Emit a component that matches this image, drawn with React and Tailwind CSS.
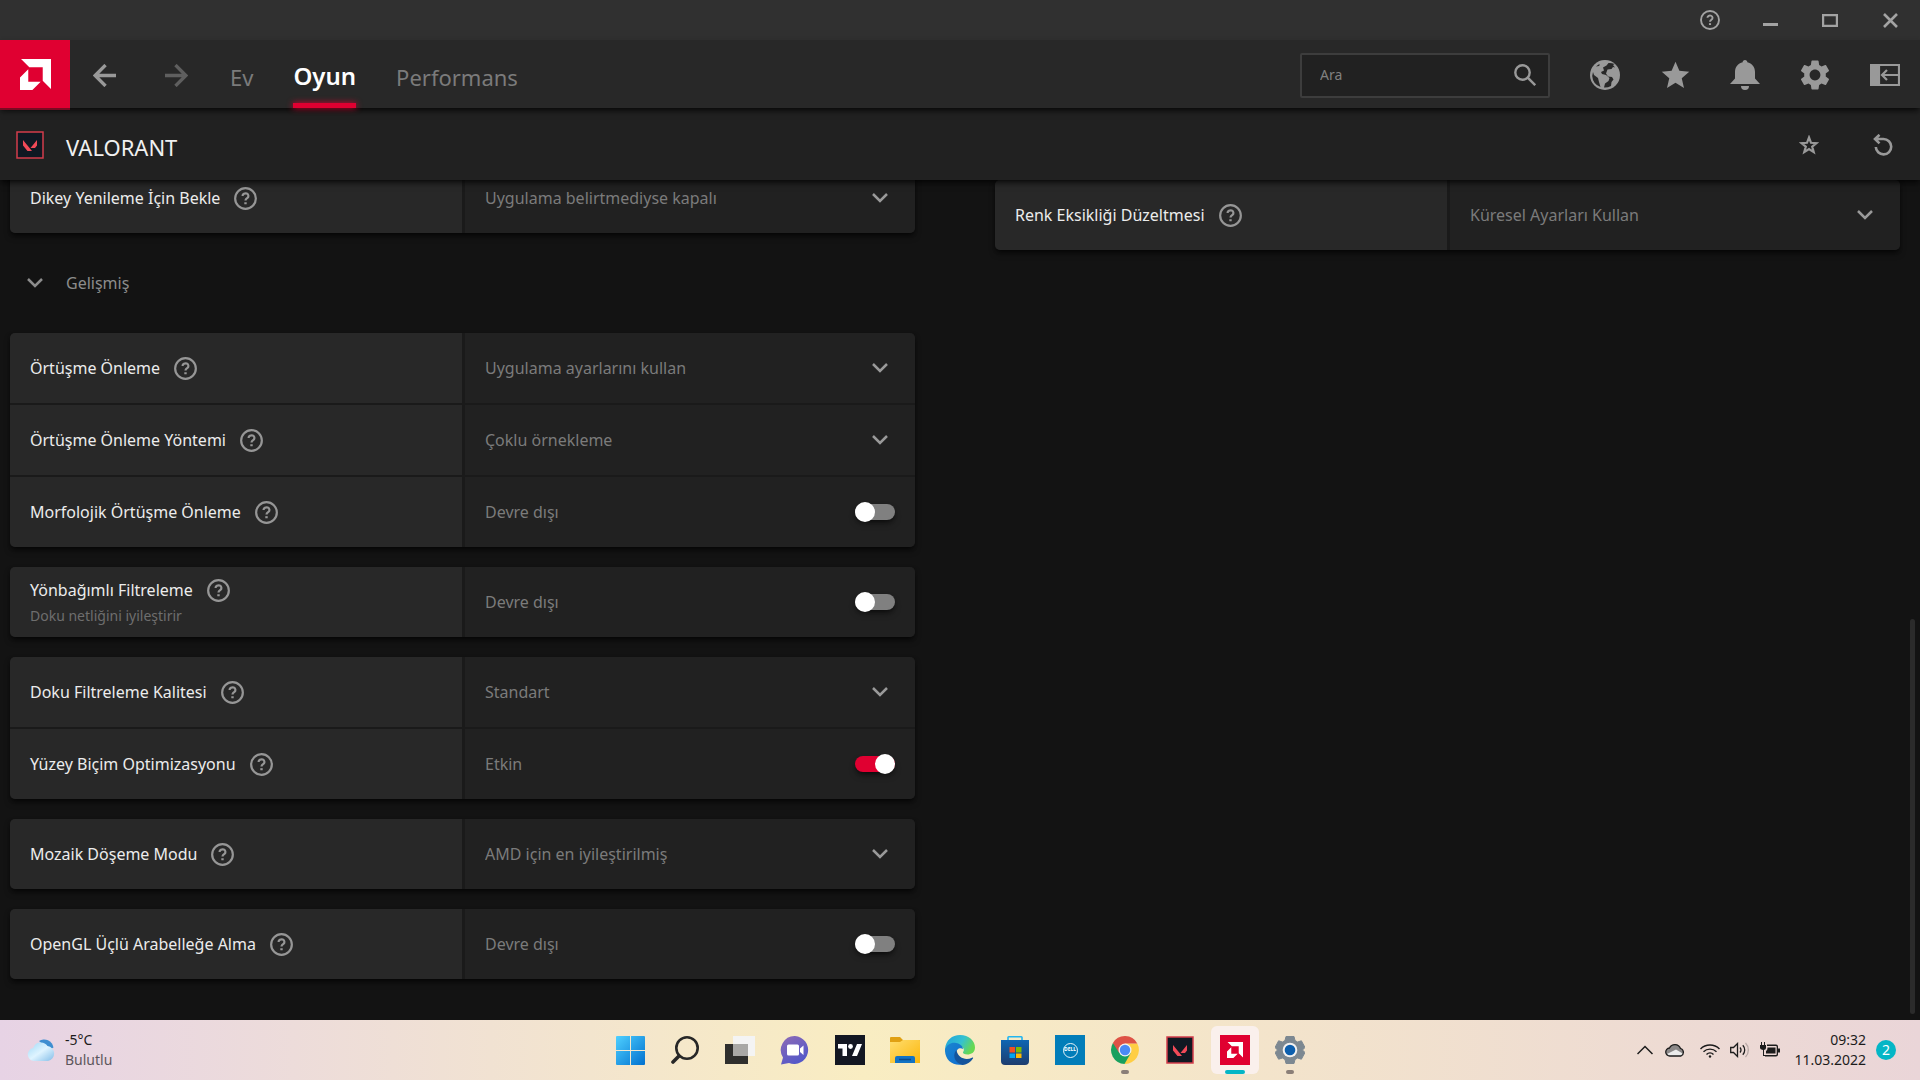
import { useState } from 'react';
import { MdStar, MdSettings } from 'react-icons/md';

const advancedGroups = [
  [
    { id: 'aa', label: 'Örtüşme Önleme', type: 'select', value: 'Uygulama ayarlarını kullan' },
    { id: 'aa-method', label: 'Örtüşme Önleme Yöntemi', type: 'select', value: 'Çoklu örnekleme' },
    { id: 'mlaa', label: 'Morfolojik Örtüşme Önleme', type: 'switch', value: false },
  ],
  [
    { id: 'af', label: 'Yönbağımlı Filtreleme', hint: 'Doku netliğini iyileştirir', type: 'switch', value: false },
  ],
  [
    { id: 'tfq', label: 'Doku Filtreleme Kalitesi', type: 'select', value: 'Standart' },
    { id: 'sfo', label: 'Yüzey Biçim Optimizasyonu', type: 'switch', value: true },
  ],
  [{ id: 'tess', label: 'Mozaik Döşeme Modu', type: 'select', value: 'AMD için en iyileştirilmiş' }],
  [{ id: 'triple', label: 'OpenGL Üçlü Arabelleğe Alma', type: 'switch', value: false }],
];

const vsyncGroup = [
  { id: 'vsync', label: 'Dikey Yenileme İçin Bekle', type: 'select', value: 'Uygulama belirtmediyse kapalı' },
];
const colorGroup = [
  { id: 'color', label: 'Renk Eksikliği Düzeltmesi', type: 'select', value: 'Küresel Ayarları Kullan' },
];

function AmdLogo({ className }) {
  return (
    <svg viewBox="0 0 30 30" className={className} fill="currentColor" aria-hidden="true">
      <path d="M1 0h29v29l-8-8V8H9z" />
      <path d="M8 10v12h12l-8 8H0V18z" />
    </svg>
  );
}

function ValorantIcon({ className }) {
  return (
    <svg viewBox="0 0 28 28" className={className} aria-hidden="true">
      <rect x="1" y="1" width="26" height="26" fill="#101822" stroke="#d23c4b" strokeWidth="1.5" />
      <path d="M7 9l9 11h-4.500l-4.500-5.500z M21 9v5.500l-2 2.500h-4.500z" fill="#f04a58" />
    </svg>
  );
}

function HelpIcon({ size = 23 }) {
  return (
    <svg width={size} height={size} viewBox="0 0 22 22" fill="none" stroke="currentColor" aria-hidden="true">
      <circle cx="11" cy="11" r="9.900" strokeWidth="2.100" />
      <path d="M8.200 8.600a2.800 2.500 0 1 1 4.400 2c-1 .7-1.600 1.100-1.600 2.400" strokeWidth="2.100" />
      <path d="M11 14.500v2" strokeWidth="2.300" />
    </svg>
  );
}

function Chevron() {
  return (
    <svg width="16" height="10" viewBox="0 0 16 10" fill="none" stroke="currentColor" strokeWidth="2.500" aria-hidden="true">
      <path d="M1 1l7 7 7-7" />
    </svg>
  );
}

function Arrow({ className }) {
  return (
    <svg viewBox="0 0 22 22" className={className} fill="none" stroke="currentColor" strokeWidth="3.200" aria-hidden="true">
      <path d="M22 11H2M12 1L2 11l10 10" />
    </svg>
  );
}

function SettingRow({ item }) {
  const [on, setOn] = useState(item.value === true);

  return (
    <div className="grid h-[70px] grid-cols-[452fr_450fr] gap-[3px]">
      <div className="flex flex-col justify-center gap-1 bg-[#282828] pl-5">
        <div className="flex items-center gap-[14px]">
          <label htmlFor={item.id} className="text-base leading-6 text-[#ececec]">{item.label}</label>
          <button aria-label={`${item.label} yardım`} className="text-[#969696]">
            <HelpIcon />
          </button>
        </div>
        {item.hint && <p className="text-sm leading-5 text-[#6e6e6e]">{item.hint}</p>}
      </div>

      {item.type === 'select' ? (
        <div className="relative bg-[#212121] text-[#999999]">
          <select
            id={item.id}
            defaultValue={item.value}
            className="h-full w-full appearance-none bg-transparent pl-5 pr-12 text-base text-[#7b7b7b] outline-none"
          >
            <option>{item.value}</option>
          </select>
          <span className="pointer-events-none absolute inset-y-0 right-[27px] flex items-center">
            <Chevron />
          </span>
        </div>
      ) : (
        <div className="flex items-center justify-between bg-[#212121] px-5">
          <span className="text-base text-[#7b7b7b]">{on ? 'Etkin' : 'Devre dışı'}</span>
          <input
            id={item.id}
            type="checkbox"
            role="switch"
            checked={on}
            onChange={(e) => setOn(e.target.checked)}
            className="flex h-4 w-10 appearance-none items-center rounded-full bg-[#808080] shadow-md shadow-black/50 before:size-5 before:rounded-full before:bg-white checked:justify-end checked:bg-[#e00031]"
          />
        </div>
      )}
    </div>
  );
}

function SettingGroup({ items }) {
  return (
    <div className="flex flex-col gap-[2px] overflow-hidden rounded-[5px] bg-[#1a1a1a] shadow-md shadow-black/60">
      {items.map((item) => (
        <SettingRow key={item.id} item={item} />
      ))}
    </div>
  );
}

function TitleBar() {
  return (
    <div className="flex h-10 items-center justify-end bg-[#303030] text-[#a3a3a3]">
      <button aria-label="Yardım" className="flex w-15 justify-center"><HelpIcon size={20} /></button>
      <button aria-label="Simge durumuna küçült" className="flex w-15 justify-center">
        <svg width="15" height="15" viewBox="0 0 15 15"><path d="M0 10h15v3H0z" fill="currentColor" /></svg>
      </button>
      <button aria-label="Ekranı kapla" className="flex w-15 justify-center">
        <svg width="16" height="13" viewBox="0 0 16 13" fill="none" stroke="currentColor" strokeWidth="2.200">
          <path d="M1.100 1.100h13.800v10.800H1.100z" />
        </svg>
      </button>
      <button aria-label="Kapat" className="flex w-15 justify-center">
        <svg width="15" height="15" viewBox="0 0 15 15" fill="none" stroke="currentColor" strokeWidth="2.600">
          <path d="M1 1l13 13M14 1L1 14" />
        </svg>
      </button>
    </div>
  );
}

function NavBar() {
  return (
    <header className="relative z-20 flex h-[68px] items-center justify-between bg-[#282828] shadow-md shadow-black/60">
      <div className="flex h-full items-center">
        <a href="#amd" aria-label="AMD" className="flex h-full w-[70px] items-center justify-center bg-[#e00031] text-white shadow-[0_2px_0_#7a0a22]">
          <AmdLogo className="size-[31px]" />
        </a>
        <button aria-label="Geri" className="flex w-[68px] justify-center pt-0.5 text-[#999999]">
          <Arrow className="size-[23px]" />
        </button>
        <button aria-label="İleri" className="ml-1 flex w-[68px] justify-center pt-0.5 text-[#5f5f5f]">
          <Arrow className="size-[23px] rotate-180" />
        </button>
        <nav className="ml-5 flex h-full gap-10 text-[22px] text-[#7b7b7b]">
          <a href="#ev" className="flex items-center pt-1.5">Ev</a>
          <a href="#oyun" className="relative flex items-center pt-1 text-2xl font-semibold text-white">
            Oyun
            <span className="absolute inset-x-0 bottom-0 h-[5px] bg-[#e00031] shadow-[0_0_6px_#e00031]" />
          </a>
          <a href="#performans" className="flex items-center pt-1.5">Performans</a>
        </nav>
      </div>

      <div className="flex items-center pt-0.5 text-[#999999]">
        <div className="mr-5 flex h-[45px] w-[250px] items-center justify-between rounded-xs border-2 border-[#3d3d3d] bg-[#212121] pl-[18px] pr-3">
          <input
            type="text"
            aria-label="Ara"
            placeholder="Ara"
            className="w-40 bg-transparent text-sm outline-none placeholder:text-[#808080]"
          />
          <svg width="22" height="22" viewBox="0 0 22 22" fill="none" stroke="currentColor" strokeWidth="2.400" aria-hidden="true">
            <circle cx="8.500" cy="8.500" r="7.200" />
            <path d="M13.700 13.700l7.500 7.500" />
          </svg>
        </div>
        <button aria-label="Web" className="flex w-[70px] justify-center">
          <svg width="30" height="30" viewBox="0 0 30 30">
            <circle cx="15" cy="15" r="15" fill="currentColor" />
            <path d="M3 12l1 3 4 3 1 4 1.500 5A12.800 12.800 0 0 1 2.200 16zM18.500 3l-2 2.500-3.500 2 1 3-3 1.500 1 2 4 1 3.500 3-1 3-3.500 2.500-1 4a13 13 0 0 0 7-1.500l.5-4 2-2.500-1.500-2.500-4-.5-2-3 1.500-4 4-.5 1.500-2 2 .5-2-2.500 1.500-1A13 13 0 0 0 18.500 3zM6 6.500l3-.5 1-1.500L8.500 4.500z" fill="#282828" />
          </svg>
        </button>
        <button aria-label="Sık kullanılanlar" className="flex w-[70px] justify-center"><MdStar size={33} /></button>
        <button aria-label="Bildirimler" className="flex w-[70px] justify-center">
          <svg width="30" height="30" viewBox="0 0 30 30" fill="currentColor">
            <path d="M15 0c1.500 0 2.300 1 2.300 2.200C22 3.400 25 7 25 12v6.500L30 24H0l5-5.500V12c0-5 3-8.600 7.700-9.800C12.700 1 13.500 0 15 0z" />
            <path d="M11 26h8a4 4 0 0 1-8 0z" />
          </svg>
        </button>
        <button aria-label="Ayarlar" className="flex w-[70px] justify-center"><MdSettings size={36} /></button>
        <button aria-label="Kenar çubuğu" className="flex w-[70px] justify-center">
          <svg width="30" height="22" viewBox="0 0 30 22" fill="none" stroke="currentColor" strokeWidth="2.200">
            <path d="M0 0h10v22H0z" fill="currentColor" stroke="none" />
            <path d="M9 1h20v20H9zM29 11H12M17 6l-5 5 5 5" />
          </svg>
        </button>
      </div>
    </header>
  );
}

function GameBar() {
  return (
    <div className="relative z-10 flex h-[72px] items-center justify-between bg-[#212121] pt-0.5 shadow-md shadow-black/60">
      <div className="flex items-center gap-[22px] pl-4">
        <ValorantIcon className="size-7" />
        <h1 className="pt-1 text-[22px] leading-8 text-[#f0f0f0]">VALORANT</h1>
      </div>
      <div className="flex items-center text-[#999999]">
        <button aria-label="Favorilere ekle" className="flex w-[74px] justify-center">
          <svg width="20" height="20" viewBox="0 0 20 20" fill="none" stroke="currentColor" strokeWidth="2.200">
            <path d="M10 2.500l2 5.300 5.600.300-4.400 3.500 1.500 5.500L10 14l-4.700 3.100 1.500-5.500L2.400 8.100 8 7.800z" />
          </svg>
        </button>
        <button aria-label="Sıfırla" className="flex w-[74px] justify-center">
          <svg width="20" height="22" viewBox="0 0 20 22" fill="none" stroke="currentColor" strokeWidth="2.600">
            <path d="M2 5h8.500a7.700 7.700 0 1 1-7.700 8M6.500 .8L2 5l4.500 4.400" />
          </svg>
        </button>
      </div>
    </div>
  );
}

function WindowsIcon() {
  return (
    <svg width="29" height="29" viewBox="0 0 29 29">
      <defs>
        <linearGradient id="win" x1="0" y1="0" x2="1" y2="1">
          <stop offset="0" stopColor="#4fd0ff" />
          <stop offset="1" stopColor="#0070cf" />
        </linearGradient>
      </defs>
      <path d="M0 1q0-1 1-1h13v14H0zM15 0h13q1 0 1 1v13H15zM0 15h14v14H1q-1 0-1-1zM15 15h14v13q0 1-1 1H15z" fill="url(#win)" />
    </svg>
  );
}

function SearchIcon() {
  return (
    <svg width="28" height="28" viewBox="0 0 28 28" fill="none" stroke="#272727" strokeLinecap="round">
      <circle cx="16" cy="12" r="10.700" strokeWidth="2.600" />
      <path d="M8 20l-6 6" strokeWidth="3.600" />
    </svg>
  );
}

function TaskViewIcon() {
  return (
    <svg width="30" height="28" viewBox="0 0 30 28">
      <path d="M0 8h23v20H0z" fill="#2f2f2d" />
      <path d="M8 0h22v20H8z" fill="#f4f4f4" />
      <path d="M8 8h15v12H8z" fill="#a9a8a6" />
    </svg>
  );
}

function ChatIcon() {
  return (
    <svg width="30" height="29" viewBox="0 0 30 29">
      <defs>
        <linearGradient id="chat" x1="0" y1="0" x2=".6" y2="1">
          <stop offset="0" stopColor="#8f6bb5" />
          <stop offset="1" stopColor="#5257c9" />
        </linearGradient>
      </defs>
      <path d="M15 0a14 14 0 1 1-6 27L1 28.500l2-7A14 14 0 0 1 15 0z" fill="url(#chat)" />
      <rect x="7" y="8.500" width="12" height="11" rx="1.500" fill="#fff" />
      <path d="M20 12.500l3.500-3v9.500l-3.500-3z" fill="#fff" />
    </svg>
  );
}

function TradingViewIcon() {
  return (
    <svg width="30" height="30" viewBox="0 0 30 30">
      <path d="M0 0h30v30H0z" fill="#131722" />
      <path d="M3 9h9v12H7.500v-7.500H3zM22 9h5l-5 12h-5z" fill="#fff" />
      <circle cx="15.500" cy="11.500" r="2.400" fill="#fff" />
    </svg>
  );
}

function FolderIcon() {
  return (
    <svg width="30" height="27" viewBox="0 0 30 27">
      <defs>
        <linearGradient id="folder" x1="0" y1="0" x2="1" y2="1">
          <stop offset="0" stopColor="#ffdd6e" />
          <stop offset="1" stopColor="#fbb70c" />
        </linearGradient>
      </defs>
      <path d="M0 1q0-1 1-1h9l3 3h16q1 0 1 1v3H0z" fill="#e0a012" />
      <path d="M0 5h10l3-2h16q1 0 1 1v22H0z" fill="url(#folder)" />
      <path d="M5 26v-5q0-2 2-2h16q2 0 2 2v5z" fill="#1273c4" />
      <path d="M9 22.500h12" stroke="#0b4a8a" strokeWidth="1.500" />
    </svg>
  );
}

function EdgeIcon() {
  return (
    <svg width="30" height="30" viewBox="0 0 30 30">
      <defs>
        <linearGradient id="edge-top" x1="0" y1="0" x2="1" y2=".4">
          <stop offset="0" stopColor="#1fa2dc" />
          <stop offset=".6" stopColor="#35c1d0" />
          <stop offset="1" stopColor="#66d852" />
        </linearGradient>
        <linearGradient id="edge-left" x1="0" y1="0" x2="1" y2="1">
          <stop offset="0" stopColor="#1b86cf" />
          <stop offset="1" stopColor="#0d6bd0" />
        </linearGradient>
      </defs>
      <path d="M0 14C1 5 7 0 15 0c9 0 15 6 15 12.500 0 5-4 7-7.500 7-3 0-5-1-4.500-2.500 1.500-1 1.500-5-3.500-6C8 10 2 12 0 16z" fill="url(#edge-top)" />
      <path d="M0 14.500C2 9 7 7 11 8c4 .8 7 3 7 6-3-2-7 0-7 4.500 0 5 4 8.500 9 8.500l-2 2.500C7 31.500-.5 24 0 14.500z" fill="url(#edge-left)" />
      <path d="M11.500 15c-4 4-3 12.500 6 15 5-.5 8.500-3.500 10.500-6.500.4-.7-.2-1.200-1-.8-6 2.800-14 .8-15.500-7.700z" fill="#14549c" />
    </svg>
  );
}

function StoreIcon() {
  return (
    <svg width="30" height="29" viewBox="0 0 30 29">
      <defs>
        <linearGradient id="store" x1="0" y1="0" x2="0" y2="1">
          <stop offset="0" stopColor="#0f66b3" />
          <stop offset="1" stopColor="#1d3c6e" />
        </linearGradient>
      </defs>
      <path d="M8 5V1.500q0-.7.700-.7h12.600q.7 0 .7.700V5" fill="none" stroke="#22b5f0" strokeWidth="1.600" />
      <path d="M1 4h28v21q0 4-4 4H5q-4 0-4-4z" fill="url(#store)" />
      <path d="M9.500 11H15v5.500H9.500z" fill="#f25022" />
      <path d="M16 11h5.500v5.500H16z" fill="#7fba00" />
      <path d="M9.500 17.500H15V22H9.500z" fill="#00a4ef" />
      <path d="M16 17.500h5.500V22H16z" fill="#ffb900" />
    </svg>
  );
}

function DellIcon() {
  return (
    <span className="flex size-[30px] items-center justify-center bg-[#027db9]">
      <span className="flex size-[15px] items-center justify-center rounded-full border border-white/90 text-[5px] font-bold text-white">
        DELL
      </span>
    </span>
  );
}

function ChromeIcon() {
  return (
    <svg width="28" height="28" viewBox="0 0 28 28">
      <path d="M14 14V7.500h12.300A14 14 0 0 1 13.500 28z" fill="#ffce44" />
      <path d="M14 14l5.600 3.500L13.500 28A14 14 0 0 1 1.900 7z" fill="#18a05e" />
      <path d="M8.400 17.300L1.900 7A14 14 0 0 1 26.300 7.500H14z" fill="#de5246" />
      <circle cx="14" cy="14" r="6.500" fill="#f1f1f1" />
      <circle cx="14" cy="14" r="5.200" fill="#4a8af4" />
    </svg>
  );
}

function GearIcon() {
  return (
    <svg width="30" height="30" viewBox="0 0 30 30">
      <path
        d="M11 1.500h8l1 4 2.500 1.500 3.900-1.200L30 12.500 27.500 15 30 17.500l-3.600 6.700-3.900-1.200L20 24.500l-1 4h-8l-1-4L7.500 23l-3.900 1.200L0 17.500 2.500 15 0 12.500l3.600-6.700L7.500 7 10 5.500z"
        fill="#7d8891"
        stroke="#7d8891"
        strokeLinejoin="round"
      />
      <circle cx="15" cy="15" r="7.300" fill="#f3f1f0" />
      <circle cx="15" cy="15" r="5.300" fill="#0d5fae" />
    </svg>
  );
}

function AmdAppIcon() {
  return (
    <span className="flex size-[30px] items-center justify-center bg-[#e00031] text-white">
      <AmdLogo className="size-4" />
    </span>
  );
}

const taskbarApps = [
  { name: 'Başlat', icon: <WindowsIcon /> },
  { name: 'Arama', icon: <SearchIcon /> },
  { name: 'Görev görünümü', icon: <TaskViewIcon /> },
  { name: 'Sohbet', icon: <ChatIcon /> },
  { name: 'TradingView', icon: <TradingViewIcon /> },
  { name: 'Dosya Gezgini', icon: <FolderIcon /> },
  { name: 'Edge', icon: <EdgeIcon /> },
  { name: 'Store', icon: <StoreIcon /> },
  { name: 'Dell', icon: <DellIcon /> },
  { name: 'Chrome', icon: <ChromeIcon />, running: true },
  { name: 'Valorant', icon: <ValorantIcon className="size-7" /> },
  { name: 'AMD Software', icon: <AmdAppIcon />, active: true },
  { name: 'Ayarlar', icon: <GearIcon />, running: true },
];

function Tray() {
  return (
    <div className="flex items-center justify-end pr-6 text-[#1c1c1c]">
      <button aria-label="Gizli simgeleri göster">
        <svg width="16" height="10" viewBox="0 0 16 10" fill="none" stroke="currentColor" strokeWidth="1.500">
          <path d="M.5 9L8 1.500 15.500 9" />
        </svg>
      </button>
      <svg className="ml-3" width="20" height="14" viewBox="0 0 20 14" aria-hidden="true">
        <path d="M5 13a4 4 0 0 1-.5-8A6 6 0 0 1 15.500 5.500 4 4 0 0 1 16 13z" fill="#8b8888" />
        <path d="M2 11l9-4.500L18.500 11l-2.500 2H5z" fill="#ececec" />
        <path d="M5 13a4 4 0 0 1-.5-8A6 6 0 0 1 15.500 5.500 4 4 0 0 1 16 13z" fill="none" stroke="#1c1c1c" strokeWidth="1.300" />
      </svg>
      <svg className="ml-[15px]" width="20" height="15" viewBox="0 0 20 15" fill="none" stroke="currentColor" strokeWidth="1.400" aria-hidden="true">
        <path d="M.5 6a13.400 13.400 0 0 1 19 0M3.500 8.800a9.200 9.200 0 0 1 13 0M6.500 11.500a5 5 0 0 1 7 0" />
        <circle cx="10" cy="13.500" r="1.200" fill="currentColor" stroke="none" />
      </svg>
      <svg className="ml-[10px]" width="20" height="16" viewBox="0 0 20 16" fill="none" stroke="currentColor" strokeWidth="1.300" aria-hidden="true">
        <path d="M.7 5.500h2.800L7.500 1.500v13l-4-4H.7zM10 5.500a4 4 0 0 1 0 5M12.800 3.200a7 7 0 0 1 0 9.600" />
        <path d="M15.500 1a10 10 0 0 1 0 14" opacity=".25" />
      </svg>
      <svg className="ml-[10px]" width="20" height="16" viewBox="0 0 20 16" fill="currentColor" aria-hidden="true">
        <path d="M1 0h1v3h2V0h1v3h1v3q0 1.500-2 2v5h2v1H3V8Q0 7.500 0 6V3h1z" />
        <path d="M7 2.500h9q2 0 2 2v2h2v4h-2v2q0 2-2 2H5V13h11q.700 0 .700-.700V4.700Q16.700 4 16 4H7z" />
        <path d="M7.500 5.500h8v6H6V9q1.500-.5 1.500-3z" />
      </svg>
      <div className="ml-[14px] flex flex-col items-end text-sm leading-5">
        <time>09:32</time>
        <time>11.03.2022</time>
      </div>
      <span className="ml-[10px] flex size-5 items-center justify-center rounded-full bg-[#04b6c6] text-sm text-white">2</span>
    </div>
  );
}

function Taskbar() {
  return (
    <footer className="grid h-15 grid-cols-[1fr_auto_1fr] items-center bg-linear-to-r from-[#e7d3e5] via-[#f9edc2] via-45% to-[#ead5d8]">
      <div className="flex items-center gap-[10px] pl-[27px]">
        <svg width="28" height="23" viewBox="0 0 28 23" aria-hidden="true">
          <defs>
            <linearGradient id="cloud" x1="0" y1="0" x2="1" y2="1">
              <stop offset="0" stopColor="#9fd8f6" />
              <stop offset=".5" stopColor="#dff4ff" />
              <stop offset="1" stopColor="#83bde8" />
            </linearGradient>
          </defs>
          <path d="M12 2a9.500 9.500 0 0 1 14.500 6.500L22 11z" fill="#3f8ed0" />
          <path d="M7 22a6.500 6.500 0 0 1-.8-12.900A8 8 0 0 1 20.500 7a7.600 7.600 0 0 1 .5 15z" fill="url(#cloud)" />
        </svg>
        <div className="flex flex-col text-sm leading-5">
          <span className="text-[#1c1c1c]">-5°C</span>
          <span className="text-[#5d565c]">Bulutlu</span>
        </div>
      </div>

      <div className="flex gap-[7px]">
        {taskbarApps.map((app) => (
          <button
            key={app.name}
            aria-label={app.name}
            className={`relative flex size-12 items-center justify-center rounded-md ${app.active ? 'bg-[#faf0ec]' : ''}`}
          >
            {app.icon}
            {app.active && <span className="absolute bottom-0 h-1 w-5 rounded-full bg-[#04b6c6]" />}
            {app.running && <span className="absolute bottom-0 h-1 w-2 rounded-full bg-[#8b7f78]" />}
          </button>
        ))}
      </div>

      <Tray />
    </footer>
  );
}

export default function App() {
  return (
    <div className="flex h-screen flex-col overflow-hidden bg-[#131313] font-['Noto_Sans',sans-serif]">
      <TitleBar />
      <NavBar />
      <GameBar />

      <main className="relative grid min-h-0 flex-1 grid-cols-2 items-start gap-20 overflow-hidden pl-[10px] pr-5">
        <section className="-mt-[17px] flex flex-col gap-5">
          <SettingGroup items={vsyncGroup} />
          <button className="flex h-15 items-center gap-[23px] pl-[17px] text-base text-[#8c8c8c]">
            <Chevron />
            Gelişmiş
          </button>
          {advancedGroups.map((group) => (
            <SettingGroup key={group[0].id} items={group} />
          ))}
        </section>
        <section>
          <SettingGroup items={colorGroup} />
        </section>
        <div className="absolute bottom-[6px] right-[5px] h-[47%] w-[5px] rounded-full bg-[#2b2b2b]" />
      </main>

      <Taskbar />
    </div>
  );
}
